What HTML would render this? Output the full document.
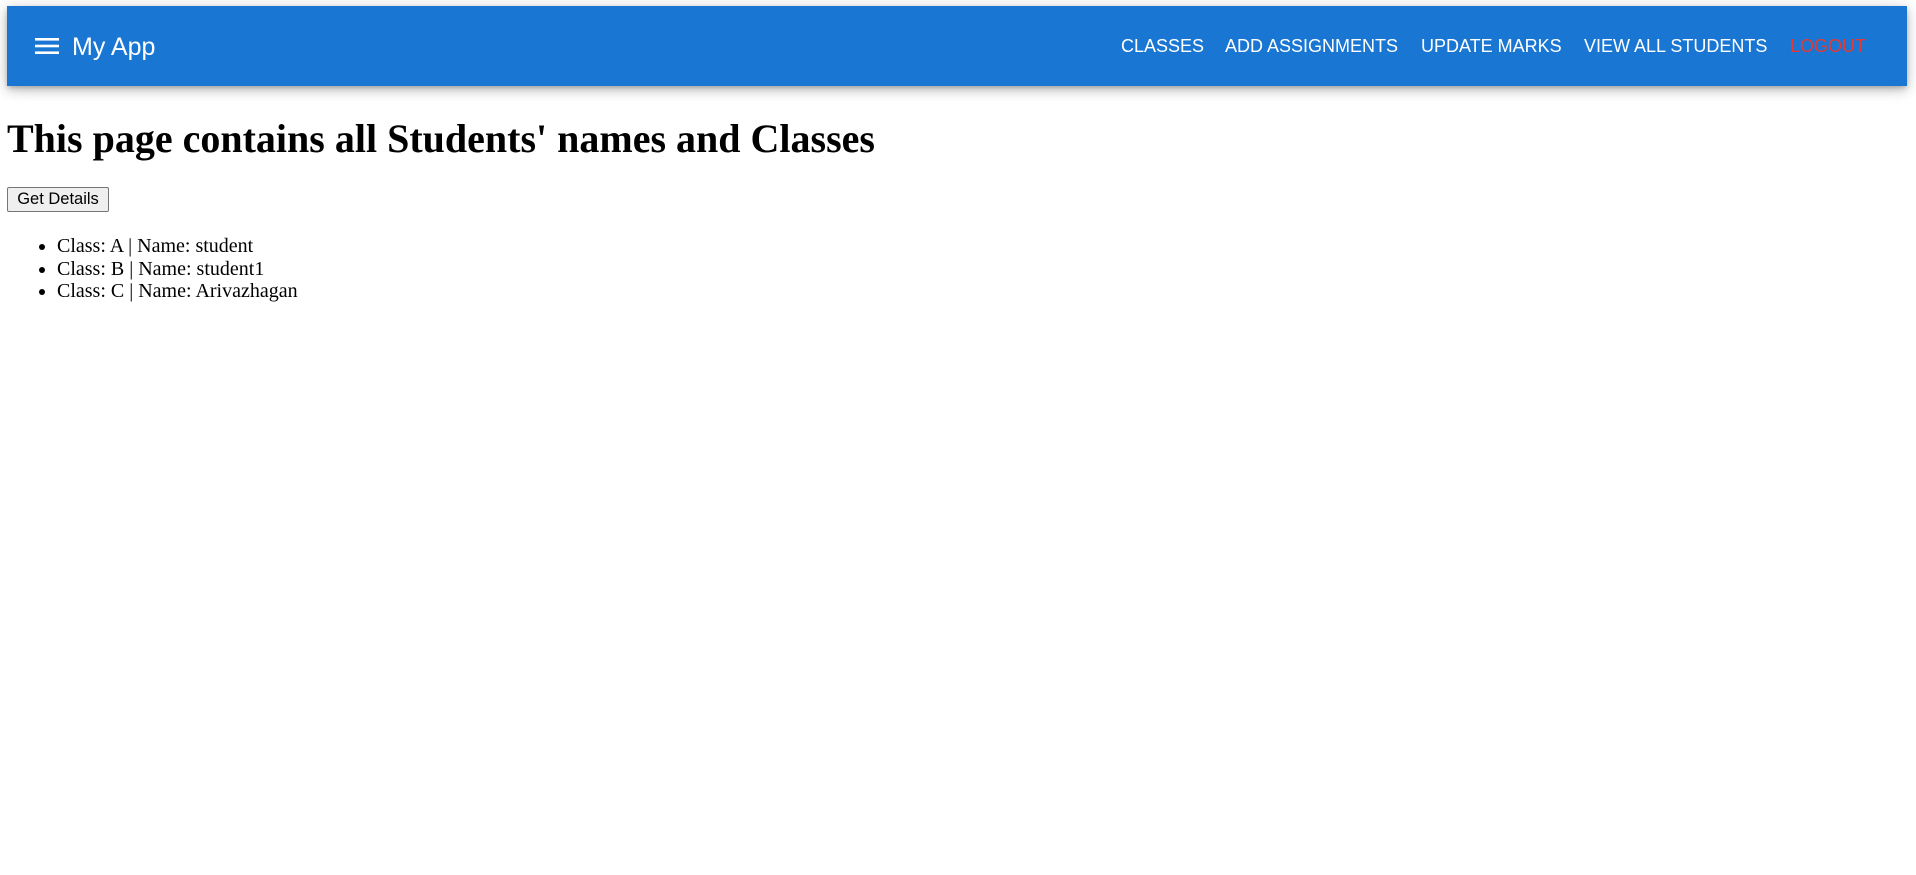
<!DOCTYPE html>
<html><head><meta charset="utf-8"><style>
html,body{margin:0;padding:0;background:#fff;width:1916px;height:875px;overflow:hidden;position:relative;font-family:"Liberation Serif",serif;}
.bar{position:absolute;left:7px;top:6px;width:1900px;height:80px;background:#1976d2;box-shadow:0 2px 5px -1px rgba(0,0,0,.25),0 5px 10px 0 rgba(0,0,0,.16),0 1px 18px 0 rgba(0,0,0,.12);}
.ham{position:absolute;left:35px;top:37px;}
.title{position:absolute;left:72px;top:31px;color:#fff;font:500 25px/32px "Liberation Sans",sans-serif;}
.nav{position:absolute;top:35px;color:#fff;font:500 18px/22px "Liberation Sans",sans-serif;white-space:nowrap;}
h1{position:absolute;left:7px;top:115px;margin:0;font:bold 40px/48px "Liberation Serif",serif;white-space:nowrap;}
button{position:absolute;left:7px;top:187px;width:102px;height:25px;font:16.5px "Liberation Sans",sans-serif;background:#efefef;border:1px solid #767676;border-radius:2px;padding:0;}
ul{position:absolute;left:17px;top:235px;margin:0;padding-left:40px;font:20px/22.7px "Liberation Serif",serif;}
</style></head><body>
<div class="bar"></div>
<svg class="ham" width="24" height="18" viewBox="0 0 24 18"><rect x="0" y="1" width="24" height="2.6" fill="#fff"/><rect x="0" y="7.7" width="24" height="2.6" fill="#fff"/><rect x="0" y="14.4" width="24" height="2.6" fill="#fff"/></svg>
<div class="title">My App</div>
<div class="nav" style="left:1121px">CLASSES</div>
<div class="nav" style="left:1225px">ADD ASSIGNMENTS</div>
<div class="nav" style="left:1421px">UPDATE MARKS</div>
<div class="nav" style="left:1584px">VIEW ALL STUDENTS</div>
<div class="nav" style="left:1790px;color:#e53935">LOGOUT</div>
<h1>This page contains all Students' names and Classes</h1>
<button>Get Details</button>
<ul>
<li>Class: A | Name: student</li>
<li>Class: B | Name: student1</li>
<li>Class: C | Name: Arivazhagan</li>
</ul>
</body></html>
